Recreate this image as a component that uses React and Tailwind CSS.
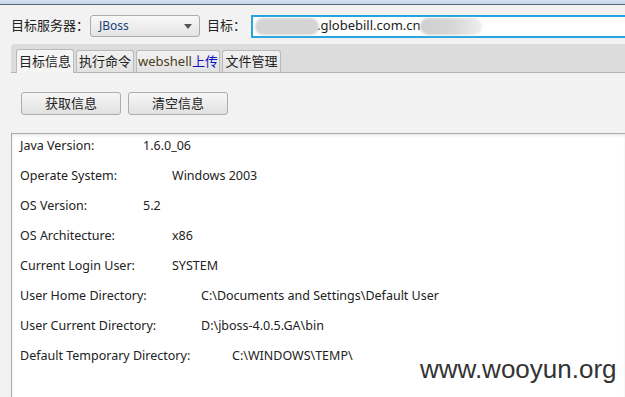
import React from "react";

const rows = [
  ["Java Version:", "1.6.0_06", "pl-[123px]"],
  ["Operate System:", "Windows 2003", "pl-[152px]"],
  ["OS Version:", "5.2", "pl-[123px]"],
  ["OS Architecture:", "x86", "pl-[152px]"],
  ["Current Login User:", "SYSTEM", "pl-[152px]"],
  ["User Home Directory:", "C:\\Documents and Settings\\Default User", "pl-[181px]"],
  ["User Current Directory:", "D:\\jboss-4.0.5.GA\\bin", "pl-[181px]"],
  ["Default Temporary Directory:", "C:\\WINDOWS\\TEMP\\", "pl-[212px]"],
];

export default function App() {
  const font = { fontFamily: '"Noto Sans", "Noto Sans CJK SC", sans-serif' };
  return (
    <div className="w-[625px] h-[397px] overflow-hidden bg-[#f2f2f2] text-[#222] text-[12px] relative" style={font}>
      <div className="h-[5px] bg-gradient-to-b from-[#d6e3f2] to-[#c3d5ea] border-b border-[#5d6670]" />
      <div className="flex items-center h-[30px] mt-[6px]">
        <span className="ml-[11px] w-[79px] text-[13px]">目标服务器：</span>
        <div className="w-[110px] h-[22px] rounded-[3px] border border-[#acacac] bg-gradient-to-b from-[#f9f9f9] to-[#e3e3e3] flex items-center justify-between pl-[8px] pr-[7px]">
          <span className="text-[#1a3f7a] text-[12px]">JBoss</span>
          <svg width="8" height="5" viewBox="0 0 8 5"><path d="M0 0h8L4 5z" fill="#555" /></svg>
        </div>
        <span className="ml-[7px] w-[44px] text-[13px]">目标：</span>
        <div className="flex-1 h-[23px] border-2 border-[#25a6dc] border-r-0 bg-white flex items-center relative">
          <div className="w-[64px] h-[17px] ml-[2px] bg-[#d4d4d4] rounded-full blur-[1px]" />
          <span className="text-[13px] text-[#222] -ml-[2px]">.globebill.com.cn</span>
          <div className="w-[62px] h-[17px] -ml-[1px] bg-gradient-to-r from-[#cfcfcf] via-[#d6d6d6] to-[#eeeeee] rounded-full blur-[1px]" />
        </div>
      </div>
      <div className="h-[3px]" />
      <div className="ml-[11px] h-[29px] bg-[#dcdcdc] rounded-tl-[4px] border-b border-[#b4b4b4] flex items-end pl-[5px] gap-[2px]">
        <div className="w-[58px] h-[24px] bg-[#f5f5f5] border border-b-0 border-[#b9b9b9] rounded-t-[3px] flex items-center justify-center text-[13px] -mb-px">目标信息</div>
        <div className="w-[58px] h-[22px] bg-gradient-to-b from-[#f2f2f2] to-[#e2e2e2] border border-b-0 border-[#b9b9b9] rounded-t-[3px] flex items-center justify-center text-[13px]">执行命令</div>
        <div className="w-[84px] h-[22px] bg-gradient-to-b from-[#f2f2f2] to-[#e2e2e2] border border-b-0 border-[#b9b9b9] rounded-t-[3px] flex items-center justify-center text-[13px] text-[#4a3b20]">webshell<span className="text-[#1010c0]">上传</span></div>
        <div className="w-[59px] h-[22px] bg-gradient-to-b from-[#f2f2f2] to-[#e2e2e2] border border-b-0 border-[#b9b9b9] rounded-t-[3px] flex items-center justify-center text-[13px]">文件管理</div>
      </div>
      <div className="flex gap-[7px] ml-[21px] mt-[19px]">
        <button className="w-[100px] h-[23px] rounded-[3px] border border-[#adadad] bg-gradient-to-b from-[#f7f7f7] to-[#e1e1e1] text-[13px]">获取信息</button>
        <button className="w-[100px] h-[23px] rounded-[3px] border border-[#adadad] bg-gradient-to-b from-[#f7f7f7] to-[#e1e1e1] text-[13px]">清空信息</button>
      </div>
      <div className="ml-[11px] mt-[18px] h-[300px] bg-white border-t border-l border-[#a9a9a9] shadow-[inset_0_2px_3px_rgba(0,0,0,0.08)]">
        {rows.map(([k, v, pl]) => (
          <div key={k} className="h-[30px] flex items-start pt-[3px] pl-[8px] text-[12.5px] text-[#222]">
            <span className="w-0 whitespace-nowrap">{k}</span>
            <span className={`whitespace-nowrap ${pl}`}>{v}</span>
          </div>
        ))}
      </div>
      <div className="absolute left-[420px] top-[350px] text-[26px] text-[#333]" style={{ fontFamily: '"Liberation Sans", sans-serif' }}>www.wooyun.org</div>
    </div>
  );
}
